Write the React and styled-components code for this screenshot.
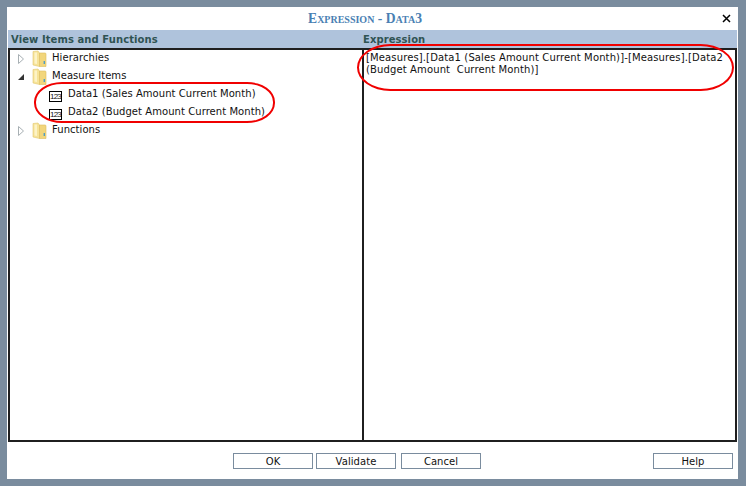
import React from 'react';
import styled, { createGlobalStyle } from 'styled-components';

const GlobalStyle = createGlobalStyle`
  html, body {
    margin: 0;
    padding: 0;
    background-color: #7a8c9e;
  }
`;

const treeItems = [
  { label: 'Hierarchies', kind: 'folder', state: 'closed' },
  { label: 'Measure Items', kind: 'folder', state: 'open' },
  { label: 'Data1 (Sales Amount Current Month)', kind: 'measure' },
  { label: 'Data2 (Budget Amount Current Month)', kind: 'measure' },
  { label: 'Functions', kind: 'folder', state: 'closed' },
];

const FolderIcon = () => (
  <svg width="15" height="18" viewBox="0 0 15 18">
    <path d="M1 1.5 L6 1 L7.5 3 L7.5 16.5 L1 15 Z" fill="#f6e398" stroke="#e3c76e" strokeWidth="0.6" />
    <path d="M7.5 3 L13 3 Q14 3 14 4 L14 16.5 L7.5 16.5 Z" fill="#f2d67c" stroke="#dcbc5e" strokeWidth="0.6" />
    <path d="M2.5 2.5 L5 2.5 L5 14 L2.5 13.6 Z" fill="#fdf3c6" />
    <rect x="11.6" y="11" width="1.4" height="3" fill="#4f9ec4" />
  </svg>
);

const Arrow = ({ state }) =>
  state === 'open' ? (
    <svg width="8" height="10" viewBox="0 0 8 10">
      <path d="M1 8 L7 8 L7 2 Z" fill="#333333" />
    </svg>
  ) : (
    <svg width="8" height="12" viewBox="0 0 8 12">
      <path d="M1.5 1.5 L6.5 6 L1.5 10.5 Z" fill="#ffffff" stroke="#a8b0b4" />
    </svg>
  );

const App = () => (
  <>
    <GlobalStyle />
    <Page>
      <Dialog>
        <TitleBar>
          <Title>Expression - Data3</Title>
          <CloseButton>
            <svg width="9" height="9" viewBox="0 0 9 9">
              <path d="M1 1 L8 8 M8 1 L1 8" stroke="#000000" strokeWidth="1.5" />
            </svg>
          </CloseButton>
        </TitleBar>
        <Headers>
          <HeaderCell $width="352px">View Items and Functions</HeaderCell>
          <HeaderCell>Expression</HeaderCell>
        </Headers>
        <Panels>
          <TreePane>
            {treeItems.map((item) =>
              item.kind === 'folder' ? (
                <TreeRow key={item.label}>
                  <ArrowSlot><Arrow state={item.state} /></ArrowSlot>
                  <FolderSlot><FolderIcon /></FolderSlot>
                  <RowLabel>{item.label}</RowLabel>
                </TreeRow>
              ) : (
                <MeasureRow key={item.label}>
                  <MeasureIcon>123</MeasureIcon>
                  <RowLabel>{item.label}</RowLabel>
                </MeasureRow>
              )
            )}
          </TreePane>
          <ExpressionPane>
            [Measures].[Data1 (Sales Amount Current Month)]-[Measures].[Data2
            <br />
            (Budget Amount&nbsp; Current Month)]
          </ExpressionPane>
        </Panels>
        <Footer>
          <ActionButton>OK</ActionButton>
          <ActionButton>Validate</ActionButton>
          <ActionButton $marginLeft="2px">Cancel</ActionButton>
          <ActionButton $marginLeft="auto">Help</ActionButton>
        </Footer>
        <TreeHighlight />
        <ExpressionHighlight />
      </Dialog>
    </Page>
  </>
);

export default App;

const Page = styled.div`
  box-sizing: border-box;
  width: 746px;
  height: 486px;
  padding: 7px 8px 7px 7px;
`;

const Dialog = styled.div`
  position: relative;
  box-sizing: border-box;
  width: 731px;
  height: 472px;
  display: flex;
  flex-direction: column;
  padding: 0 1px 0 1px;
  background-color: #ffffff;
  font-family: "DejaVu Sans", Verdana, sans-serif;
  font-size: 10px;
  color: #111111;
`;

const TitleBar = styled.div`
  height: 23px;
  flex: none;
  display: flex;
  align-items: center;
  justify-content: center;
  padding: 0 15px 0 0;
  box-sizing: border-box;
  position: relative;
`;

const Title = styled.div`
  font-family: "Liberation Serif", "Times New Roman", serif;
  font-variant: small-caps;
  font-weight: bold;
  font-size: 13.6px;
  color: #4a7fb3;
`;

const CloseButton = styled.div`
  position: absolute;
  right: 6px;
  top: 7px;
  width: 9px;
  height: 9px;
  line-height: 0;
`;

const Headers = styled.div`
  height: 18px;
  flex: none;
  display: flex;
  background-color: #afc3dc;
`;

const HeaderCell = styled.div`
  width: ${(p) => p.$width || 'auto'};
  padding-left: 3px;
  box-sizing: border-box;
  font-size: 10px;
  font-weight: bold;
  letter-spacing: 0.08px;
  line-height: 20px;
  color: #2f5353;
`;

const Panels = styled.div`
  height: 394px;
  flex: none;
  box-sizing: border-box;
  display: flex;
  border: 2px solid #1f1f1f;
`;

const TreePane = styled.div`
  width: 354px;
  flex: none;
  box-sizing: border-box;
  border-right: 2px solid #1f1f1f;
`;

const TreeRow = styled.div`
  height: 18px;
  display: flex;
  align-items: center;
`;

const MeasureRow = styled(TreeRow)`
  padding-left: 39px;
`;

const ArrowSlot = styled.div`
  width: 22px;
  padding-left: 7px;
  box-sizing: border-box;
  display: flex;
  line-height: 0;
`;

const FolderSlot = styled.div`
  width: 20px;
  line-height: 0;
`;

const MeasureIcon = styled.div`
  box-sizing: border-box;
  width: 13px;
  height: 11px;
  margin: 2px 6px 0 0;
  border: 1px solid #000000;
  font-family: "Liberation Sans", Arial, sans-serif;
  font-size: 8px;
  letter-spacing: -0.8px;
  line-height: 9px;
  white-space: nowrap;
  text-align: center;
`;

const RowLabel = styled.span`
  font-size: 10px;
  letter-spacing: 0.06px;
  line-height: 14px;
  margin-top: -2px;
  white-space: nowrap;
`;

const ExpressionPane = styled.div`
  flex: 1;
  padding: 2px 0 0 2px;
  font-size: 10px;
  letter-spacing: 0.13px;
  line-height: 12px;
  white-space: nowrap;
`;

const Footer = styled.div`
  flex: 1;
  display: flex;
  align-items: flex-start;
  gap: 3px;
  padding: 11px 4px 0 225px;
`;

const ActionButton = styled.div`
  box-sizing: border-box;
  width: 80px;
  height: 16px;
  margin-left: ${(p) => p.$marginLeft || '0'};
  border: 1px solid #7a8c9e;
  background-color: #ffffff;
  font-size: 10px;
  letter-spacing: 0.06px;
  line-height: 16px;
  text-align: center;
`;

const TreeHighlight = styled.div`
  position: absolute;
  left: 27px;
  top: 75px;
  width: 241px;
  height: 41px;
  box-sizing: border-box;
  border: 2px solid #f00000;
  border-radius: 28px / 20px;
  pointer-events: none;
`;

const ExpressionHighlight = styled.div`
  position: absolute;
  left: 350px;
  top: 37px;
  width: 377px;
  height: 47px;
  box-sizing: border-box;
  border: 2px solid #f00000;
  border-radius: 34px / 24px;
  pointer-events: none;
`;
